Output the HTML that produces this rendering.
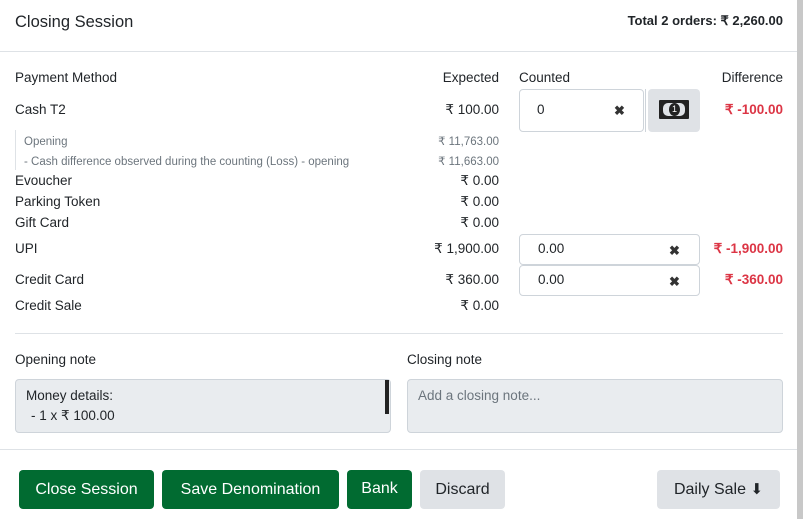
<!DOCTYPE html>
<html><head><style>
*{margin:0;padding:0;box-sizing:border-box}
body{width:803px;height:519px;background:#fff;font-family:"Liberation Sans",Arial,sans-serif;color:#212529;position:relative;overflow:hidden;font-size:13.5px}
.a{position:absolute;white-space:nowrap;line-height:16px}
.r{text-align:right}
.sm{font-size:11.5px;color:#6c757d}
.red{color:#dc3545;font-weight:bold}
.inp{position:absolute;border:1px solid #ced4da;border-radius:4px;background:#fff}
.x{position:absolute;font-weight:bold;font-size:13px;color:#333}
.btn{position:absolute;top:470px;height:39px;border-radius:4px;font-size:16px;line-height:39px;text-align:center;color:#fff;background:#016b31}
.gray{background:#dfe2e6;color:#212529}
</style></head><body>
<div style="position:absolute;right:0;top:0;width:6px;height:519px;background:#c8c8c8"></div>
<div class="a" style="left:15px;top:12px;font-size:16.5px;line-height:20px">Closing Session</div>
<div class="a" style="right:20px;top:13px;font-weight:bold;font-size:13px">Total 2 orders: ₹ 2,260.00</div>
<div style="position:absolute;left:0;top:51px;width:797px;height:1px;background:#dee2e6"></div>

<div class="a" style="left:15px;top:70px">Payment Method</div>
<div class="a" style="right:304px;top:70px">Expected</div>
<div class="a" style="left:519px;top:70px">Counted</div>
<div class="a" style="right:20px;top:70px">Difference</div>

<div class="a" style="left:15px;top:102px">Cash T2</div>
<div class="a" style="right:304px;top:102px">₹ 100.00</div>
<div class="inp" style="left:519px;top:89px;width:125px;height:43px"></div>
<div class="a" style="left:537px;top:102px">0</div>
<div class="x" style="left:614px;top:103px">✖</div>
<div style="position:absolute;left:645px;top:89px;width:1px;height:43px;background:#ced4da"></div>
<div style="position:absolute;left:648px;top:89px;width:52px;height:43px;background:#dfe2e6;border-radius:4px"></div>
<div style="position:absolute;left:659px;top:100px;width:30px;height:19px;background:#222;border-radius:1px"><div style="position:absolute;left:4px;top:3px;width:22px;height:13px;background:#dfe2e6;border-radius:5px"></div><div style="position:absolute;left:10px;top:3px;width:11px;height:13px;background:#222;border-radius:50%;color:#fff;font-size:9px;text-align:center;line-height:13px">1</div></div>
<div class="a red" style="right:20px;top:102px">₹ -100.00</div>

<div style="position:absolute;left:15px;top:130px;width:1px;height:40px;background:#dee2e6"></div>
<div class="a sm" style="left:24px;top:134px">Opening</div>
<div class="a sm" style="right:304px;top:134px">₹ 11,763.00</div>
<div class="a sm" style="left:24px;top:154px">- Cash difference observed during the counting (Loss) - opening</div>
<div class="a sm" style="right:304px;top:154px">₹ 11,663.00</div>

<div class="a" style="left:15px;top:173px">Evoucher</div><div class="a" style="right:304px;top:173px">₹ 0.00</div>
<div class="a" style="left:15px;top:194px">Parking Token</div><div class="a" style="right:304px;top:194px">₹ 0.00</div>
<div class="a" style="left:15px;top:215px">Gift Card</div><div class="a" style="right:304px;top:215px">₹ 0.00</div>

<div class="a" style="left:15px;top:241px">UPI</div><div class="a" style="right:304px;top:241px">₹ 1,900.00</div>
<div class="inp" style="left:519px;top:234px;width:181px;height:31px"></div>
<div class="a" style="left:538px;top:241px">0.00</div>
<div class="x" style="left:669px;top:243px">✖</div>
<div class="a red" style="right:20px;top:241px">₹ -1,900.00</div>

<div class="a" style="left:15px;top:272px">Credit Card</div><div class="a" style="right:304px;top:272px">₹ 360.00</div>
<div class="inp" style="left:519px;top:265px;width:181px;height:31px"></div>
<div class="a" style="left:538px;top:272px">0.00</div>
<div class="x" style="left:669px;top:274px">✖</div>
<div class="a red" style="right:20px;top:272px">₹ -360.00</div>

<div class="a" style="left:15px;top:298px">Credit Sale</div><div class="a" style="right:304px;top:298px">₹ 0.00</div>

<div style="position:absolute;left:15px;top:333px;width:768px;height:1px;background:#dee2e6"></div>
<div class="a" style="left:15px;top:352px">Opening note</div>
<div class="a" style="left:407px;top:352px">Closing note</div>
<div style="position:absolute;left:15px;top:379px;width:376px;height:54px;background:#e9ecef;border:1px solid #ced4da;border-radius:4px"></div>
<div style="position:absolute;left:385px;top:380px;width:4px;height:34px;background:#222"></div>
<div class="a" style="left:26px;top:388px">Money details:</div>
<div class="a" style="left:31px;top:408px">- 1 x ₹ 100.00</div>
<div style="position:absolute;left:407px;top:379px;width:376px;height:54px;background:#e9ecef;border:1px solid #ced4da;border-radius:4px"></div>
<div class="a" style="left:418px;top:388px;color:#6c757d">Add a closing note...</div>

<div style="position:absolute;left:0;top:449px;width:797px;height:1px;background:#dee2e6"></div>
<div class="btn" style="left:19px;width:135px">Close Session</div>
<div class="btn" style="left:162px;width:177px">Save Denomination</div>
<div class="btn" style="left:347px;width:65px;line-height:37px">Bank</div>
<div class="btn gray" style="left:420px;width:85px">Discard</div>
<div class="btn gray" style="left:657px;width:123px">Daily Sale <span style="font-size:15px">⬇</span></div>
</body></html>
